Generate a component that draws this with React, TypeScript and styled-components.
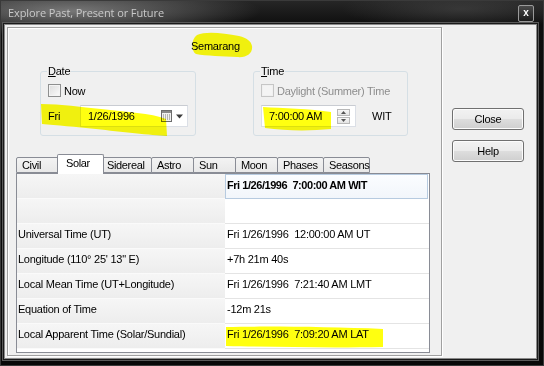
import React from "react";
import styled, { createGlobalStyle } from "styled-components";

const GlobalStyle = createGlobalStyle`
  html, body {
    margin: 0;
    padding: 0;
    background: #000;
  }
  body {
    font-family: "Liberation Sans", Arial, sans-serif;
    font-size: 11px;
    letter-spacing: -0.25px;
    color: #000;
  }
`;

const Window = styled.div`
  position: relative;
  width: 544px;
  height: 366px;
  box-sizing: border-box;
  display: flex;
  flex-direction: column;
  padding: 0 6px 6px 3px;
  border: 1px solid #3a3a3a;
  background:
    radial-gradient(ellipse 190px 26px at 70px 10px, rgba(150, 150, 150, 0.75), rgba(90, 90, 90, 0) 100%),
    radial-gradient(ellipse 120px 20px at 460px 8px, rgba(80, 80, 80, 0.5), rgba(60, 60, 60, 0) 100%),
    linear-gradient(#262626, #0e0e0e 24px, #080808);
  overflow: hidden;
`;

const TitleBar = styled.div`
  height: 23px;
  display: flex;
  align-items: center;
  justify-content: space-between;
  padding: 0 3px 0 4px;
`;

const Title = styled.span`
  font-family: "Open Sans", "Liberation Sans", sans-serif;
  font-size: 11px;
  color: #c9c9c9;
  letter-spacing: -0.1px;
  margin-top: -1px;
`;

const CloseBox = styled.div`
  width: 14px;
  height: 15px;
  margin-top: 1px;
  border: 1px solid #9a9a9a;
  border-radius: 2px;
  background: linear-gradient(#4a4a4a, #1c1c1c);
  display: flex;
  align-items: center;
  justify-content: center;
  color: #fff;
  font-weight: bold;
  font-size: 10px;
  line-height: 1;
`;

const Client = styled.div`
  flex: 1;
  display: flex;
  background: #f0f0f0;
  border: 1px solid #8a8a8a;
  box-shadow: 0 0 0 1px #1a1a1a, 0 0 0 2px #5a5a5a;
  padding: 2px 0 0 2px;
`;

const MainPanel = styled.div`
  width: 435px;
  height: 329px;
  box-sizing: border-box;
  border: 1px solid #a0a0a0;
  box-shadow: inset 1px 1px 0 #fff, 1px 1px 0 #fff;
  display: flex;
  flex-direction: column;
`;

const PlaceName = styled.div`
  padding: 12px 0 0 183px;
  line-height: 13px;
  font-size: 11px;
`;

const GroupsRow = styled.div`
  display: flex;
  gap: 57px;
  margin: 12px 0 0 32px;
`;

const Group = styled.fieldset<{ $width: number }>`
  width: ${(p) => p.$width}px;
  box-sizing: border-box;
  margin: 0;
  padding: 0 7px 8px 7px;
  border: 1px solid #d5dfe5;
  border-radius: 3px;
  min-width: 0;
`;

const Legend = styled.legend`
  padding: 0 1px;
  margin-left: -1px;
  line-height: 13px;
  font-size: 11px;
`;

const CheckRow = styled.label<{ $disabled?: boolean }>`
  display: flex;
  align-items: center;
  gap: 3px;
  margin-top: 6px;
  height: 13px;
  color: ${(p) => (p.$disabled ? "#8d8d8d" : "#000")};
`;

const CheckBox = styled.span<{ $disabled?: boolean }>`
  width: 13px;
  height: 13px;
  box-sizing: border-box;
  border: 1px solid ${(p) => (p.$disabled ? "#c6c6c6" : "#8e8f8f")};
  background: ${(p) =>
    p.$disabled
      ? "#f4f4f4"
      : "linear-gradient(135deg, #dcdcdc, #fbfbfb)"};
  box-shadow: inset 0 0 0 1px ${(p) => (p.$disabled ? "#f0f0f0" : "#f4f4f4")};
`;

const FieldRow = styled.div`
  display: flex;
  align-items: center;
  margin-top: 8px;
  height: 22px;
`;

const DayLabel = styled.span`
  width: 32px;
`;

const Field = styled.div<{ $width: number }>`
  width: ${(p) => p.$width}px;
  height: 22px;
  box-sizing: border-box;
  display: flex;
  align-items: center;
  background: #fff;
  border: 1px solid #dbdfe6;
  border-top-color: #c9ccd2;
  padding: 0 3px 0 7px;
`;

const FieldText = styled.span`
  flex: 1;
`;

const ZoneLabel = styled.span`
  margin-left: 16px;
`;

const Spinner = styled.div`
  display: flex;
  flex-direction: column;
  gap: 1px;
  margin-right: 2px;
`;

const SpinButton = styled.div`
  width: 13px;
  height: 7px;
  box-sizing: border-box;
  border: 1px solid #b8b8b8;
  background: linear-gradient(#f7f7f7, #e4e4e4);
  display: flex;
  align-items: center;
  justify-content: center;
`;

const Tabs = styled.div`
  display: flex;
  align-items: flex-end;
  height: 19px;
  margin: 18px 0 0 8px;
  position: relative;
  z-index: 1;
`;

const Tab = styled.div<{ $width: number; $active?: boolean }>`
  box-sizing: border-box;
  width: ${(p) => p.$width + (p.$active ? 5 : 1)}px;
  height: ${(p) => (p.$active ? 20 : 16)}px;
  margin: ${(p) => (p.$active ? "0 -3px -1px -2px" : "0 -1px 0 0")};
  padding: ${(p) => (p.$active ? "2px 0 0 8px" : "1px 0 0 5px")};
  border: 1px solid #898c95;
  border-bottom: ${(p) => (p.$active ? "none" : "1px solid #898c95")};
  border-radius: 2px 2px 0 0;
  background: ${(p) => (p.$active ? "#fff" : "linear-gradient(#f3f3f3, #e8e8e8)")};
  z-index: ${(p) => (p.$active ? 2 : 1)};
  line-height: 13px;
  letter-spacing: -0.35px;
  white-space: nowrap;
`;

const TabPanel = styled.div`
  width: 414px;
  height: 180px;
  box-sizing: border-box;
  margin-left: 8px;
  border: 1px solid #898c95;
  background: #fff;
  overflow: hidden;
`;

const Grid = styled.div`
  display: grid;
  grid-template-columns: 208px 1fr;
`;

const LabelCell = styled.div`
  height: 25px;
  box-sizing: border-box;
  display: flex;
  align-items: center;
  padding: 0 0 4px 1px;
  background: linear-gradient(#f6f6f6, #ededed);
  border-bottom: 1px solid #fafafa;
`;

const ValueCell = styled.div<{ $head?: boolean }>`
  height: 25px;
  box-sizing: border-box;
  display: flex;
  align-items: center;
  padding-bottom: 4px;
  background: ${(p) => (p.$head ? "linear-gradient(#fbfdff, #f2f6fb)" : "#fff")};
  border: ${(p) => (p.$head ? "1px solid #b7cbe0" : "none")};
  border-bottom: 1px solid ${(p) => (p.$head ? "#b7cbe0" : "#e4e4e4")};
  font-weight: ${(p) => (p.$head ? "bold" : "normal")};
  letter-spacing: ${(p) => (p.$head ? "-0.45px" : "-0.25px")};
  margin-right: ${(p) => (p.$head ? "1px" : "0")};
  padding-left: ${(p) => (p.$head ? "1px" : "2px")};
  white-space: pre;
`;

const SideColumn = styled.div`
  display: flex;
  flex-direction: column;
  gap: 10px;
  margin: 81px 0 0 10px;
`;

const Button = styled.button`
  width: 72px;
  height: 22px;
  box-sizing: border-box;
  border: 1px solid #707070;
  border-radius: 3px;
  background: linear-gradient(#f2f2f2 0%, #ebebeb 48%, #dddddd 52%, #cfcfcf 100%);
  box-shadow: inset 0 0 0 1px #fcfcfc;
  font-family: "Liberation Sans", Arial, sans-serif;
  font-size: 11px;
  letter-spacing: -0.25px;
  color: #000;
  padding: 0;
`;

const Markers = styled.svg`
  position: absolute;
  left: 0;
  top: 0;
  width: 544px;
  height: 366px;
  pointer-events: none;
  mix-blend-mode: multiply;
`;

const CalendarIcon = () => (
  <svg width="11" height="12" viewBox="0 0 11 12">
    <rect x="0.5" y="0.5" width="10" height="11" fill="#f2f2f2" stroke="#6d6d6d" />
    <rect x="1" y="1" width="9" height="2" fill="#8a8a8a" />
    {[2, 4, 6, 8].map((x) =>
      [4.5, 6.5, 8.5].map((y) => (
        <rect key={`${x}-${y}`} x={x} y={y} width="1" height="1" fill="#7a7a7a" />
      ))
    )}
  </svg>
);

const DropArrow = () => (
  <svg width="9" height="5" viewBox="0 0 9 5" style={{ marginLeft: 3 }}>
    <path d="M1 0.5 L8 0.5 L4.5 4.5 Z" fill="#3c3c3c" />
  </svg>
);

const SpinArrow = ({ up }: { up?: boolean }) => (
  <svg width="5" height="3" viewBox="0 0 5 3">
    <path d={up ? "M0 3 L5 3 L2.5 0 Z" : "M0 0 L5 0 L2.5 3 Z"} fill="#555" />
  </svg>
);

const tabs = [
  { name: "Civil", width: 43 },
  { name: "Solar", width: 42, active: true },
  { name: "Sidereal", width: 50 },
  { name: "Astro", width: 42 },
  { name: "Sun", width: 42 },
  { name: "Moon", width: 42 },
  { name: "Phases", width: 46 },
  { name: "Seasons", width: 46 },
];

const rows = [
  { label: "", value: "Fri 1/26/1996  7:00:00 AM WIT", head: true },
  { label: "", value: "" },
  { label: "Universal Time (UT)", value: "Fri 1/26/1996  12:00:00 AM UT" },
  { label: "Longitude (110° 25' 13\" E)", value: "+7h 21m 40s" },
  { label: "Local Mean Time (UT+Longitude)", value: "Fri 1/26/1996  7:21:40 AM LMT" },
  { label: "Equation of Time", value: "-12m 21s" },
  { label: "Local Apparent Time (Solar/Sundial)", value: "Fri 1/26/1996  7:09:20 AM LAT" },
];

export default function App() {
  return (
    <>
      <GlobalStyle />
      <Window>
        <TitleBar>
          <Title>Explore Past, Present or Future</Title>
          <CloseBox>x</CloseBox>
        </TitleBar>
        <Client>
          <MainPanel>
            <PlaceName>Semarang</PlaceName>
            <GroupsRow>
              <Group $width={156}>
                <Legend>
                  <u>D</u>ate
                </Legend>
                <CheckRow>
                  <CheckBox />
                  Now
                </CheckRow>
                <FieldRow>
                  <DayLabel>Fri</DayLabel>
                  <Field $width={108}>
                    <FieldText>1/26/1996</FieldText>
                    <CalendarIcon />
                    <DropArrow />
                  </Field>
                </FieldRow>
              </Group>
              <Group $width={155}>
                <Legend>
                  <u>T</u>ime
                </Legend>
                <CheckRow $disabled>
                  <CheckBox $disabled />
                  Daylight (Summer) Time
                </CheckRow>
                <FieldRow>
                  <Field $width={95}>
                    <FieldText>7:00:00 AM</FieldText>
                    <Spinner>
                      <SpinButton>
                        <SpinArrow up />
                      </SpinButton>
                      <SpinButton>
                        <SpinArrow />
                      </SpinButton>
                    </Spinner>
                  </Field>
                  <ZoneLabel>WIT</ZoneLabel>
                </FieldRow>
              </Group>
            </GroupsRow>
            <Tabs>
              {tabs.map((t) => (
                <Tab key={t.name} $width={t.width} $active={t.active}>
                  {t.name}
                </Tab>
              ))}
            </Tabs>
            <TabPanel>
              <Grid>
                {rows.map((r, i) => (
                  <React.Fragment key={i}>
                    <LabelCell>{r.label}</LabelCell>
                    <ValueCell $head={r.head}>{r.value}</ValueCell>
                  </React.Fragment>
                ))}
              </Grid>
            </TabPanel>
          </MainPanel>
          <SideColumn>
            <Button>Close</Button>
            <Button>Help</Button>
          </SideColumn>
        </Client>
        <Markers viewBox="0 0 544 366">
          <g fill="#ffff10">
            <path d="M196 34 C205 30 222 32 238 35 C246 37 250 40 251 45 C252 52 246 57 236 56 C222 55 205 55 195 53 C190 50 190 38 196 34 Z" />
            <path d="M40 103 C60 103 80 106 100 108 C125 111 150 112 165 118 L166 135 C150 134 120 131 95 128 C75 126 55 124 41 123 Z" />
            <path d="M262 106 C280 107 310 108 330 111 L330 128 C310 130 285 130 264 127 Z" />
            <path d="M225 326 C270 325 330 326 382 328 L382 346 C330 347 270 346 225 345 Z" />
          </g>
        </Markers>
      </Window>
    </>
  );
}
